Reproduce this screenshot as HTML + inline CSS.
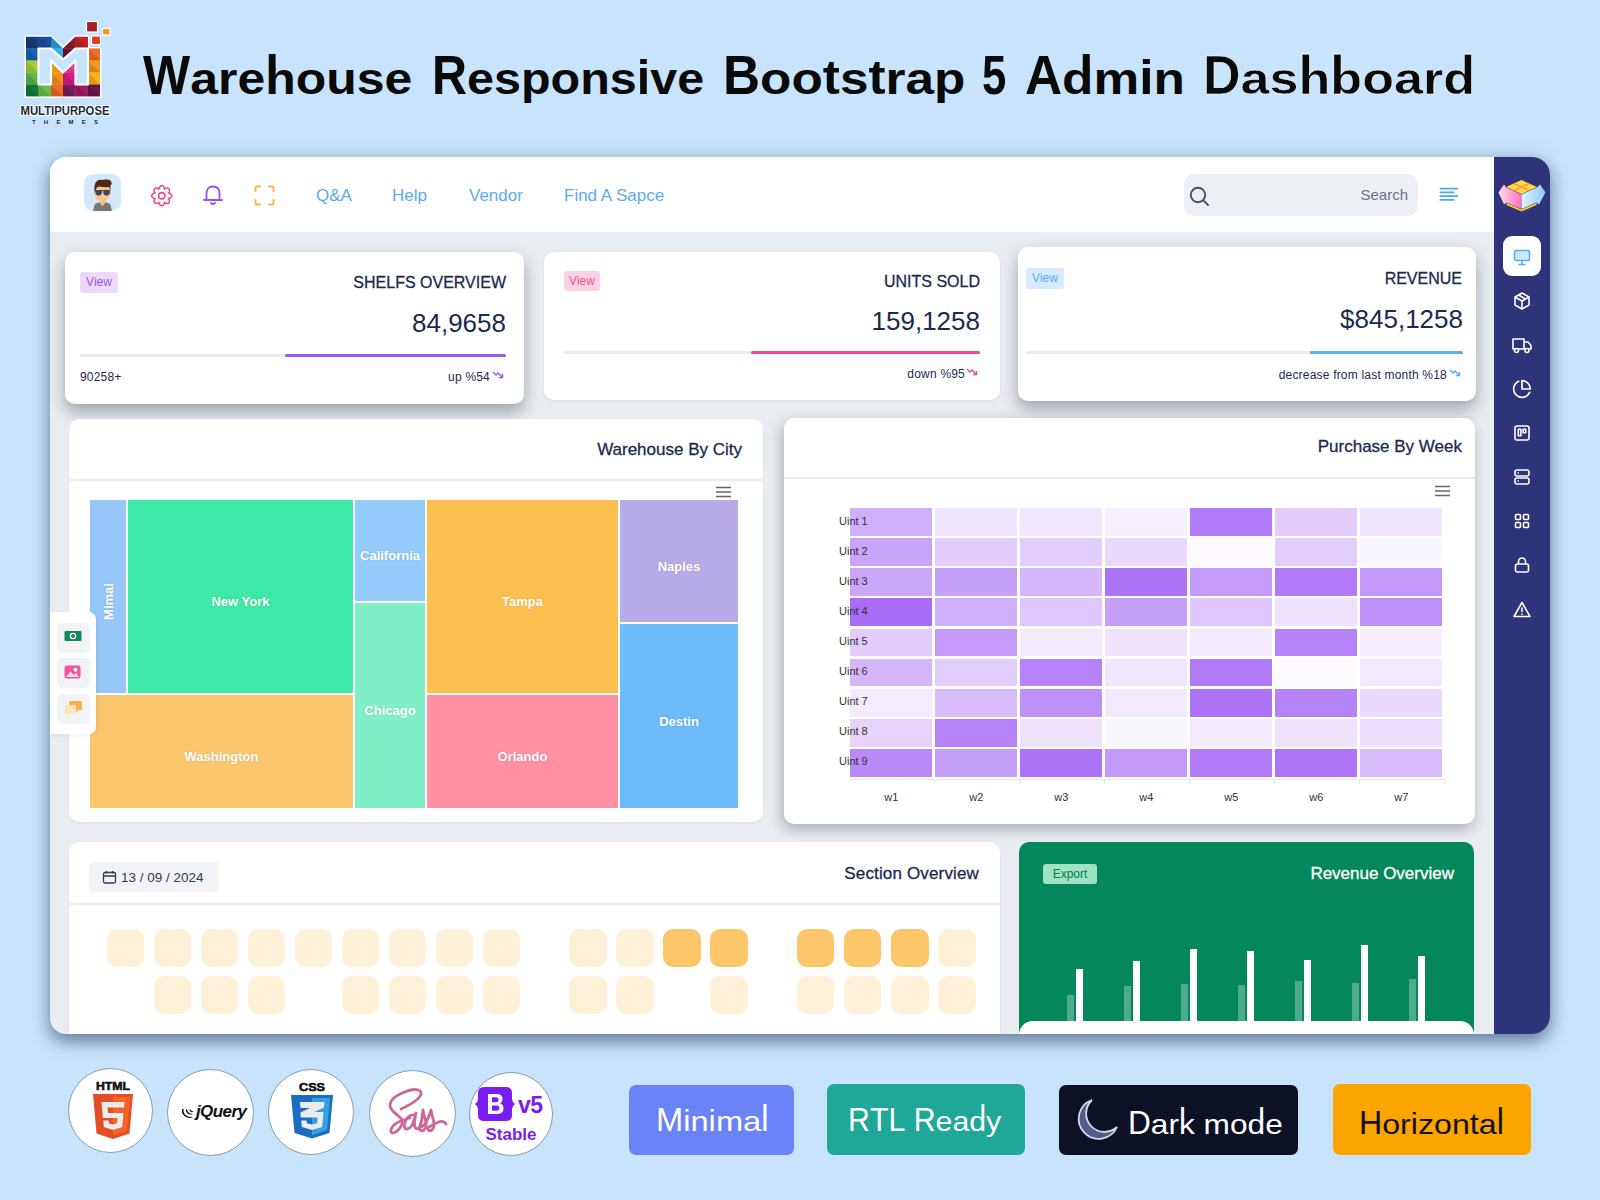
<!DOCTYPE html>
<html><head><meta charset="utf-8">
<style>
*{box-sizing:border-box;margin:0;padding:0}
html,body{width:1600px;height:1200px;overflow:hidden}
body{background:#c8e4fc;font-family:"Liberation Sans",sans-serif;position:relative;color:#1c2b4a}
.a{position:absolute}
#title{position:absolute;left:0;top:0}
.tw{position:absolute;font-family:"Liberation Sans",sans-serif}
#panel{position:absolute;left:50px;top:157px;width:1500px;height:877px;border-radius:16px 18px 18px 16px;overflow:hidden;background:#e9ecf1;box-shadow:0 8px 14px rgba(50,75,110,.45),0 4px 22px rgba(50,75,110,.35)}
#w{position:absolute;left:-50px;top:-157px;width:1600px;height:1200px}
.hdr{left:50px;top:157px;width:1444px;height:75px;background:#fff}
.side{left:1494px;top:157px;width:56px;height:877px;background:#2f3379}
.card{position:absolute;background:#fff;border-radius:10px}
.nav{position:absolute;top:186px;font-size:17px;color:#5caaf0;white-space:nowrap}
.badge{position:absolute;font-size:12px;border-radius:3px;text-align:center;line-height:21px}
.ttl{position:absolute;font-size:16px;color:#1b2a4e;white-space:nowrap;text-align:right;-webkit-text-stroke:.3px currentColor}
.num{position:absolute;font-size:26px;color:#1b2a4e;white-space:nowrap;text-align:right}
.small{position:absolute;font-size:12px;letter-spacing:.2px;color:#1b2a4e;white-space:nowrap}
.tm{position:absolute;color:#fff;font-weight:bold;font-size:13px;display:flex;align-items:center;justify-content:center;padding-top:10px;text-shadow:0 0 2px rgba(0,0,0,.15)}
.seat{position:absolute;width:37.6px;height:37.6px;border-radius:10px;background:#fff0d8}
.seat.d{background:#fbc76a}
.circ{position:absolute;width:84px;height:84px;border-radius:50%;background:#fff;border:1px solid #8a9aa8}
.btn{position:absolute;border-radius:7px;color:#fff;font-size:31px;display:flex;align-items:center;justify-content:center;white-space:nowrap}
</style></head><body>

<!-- logo -->
<svg class="a" style="left:0;top:0" width="130" height="130" viewBox="0 0 130 130">
  <defs><clipPath id="lc"><path d="M26 36.5 L51 36.5 L63 48.5 L75.5 36.5 L88 36.5 L88 48.5 L100 48.5 L100 96.5 L26 96.5Z"/></clipPath></defs>
  <path d="M26 36.5 L51 36.5 L63 48.5 L75.5 36.5 L88 36.5 L88 48.5 L100 48.5 L100 96.5 L26 96.5Z" fill="none" stroke="#fff" stroke-width="3" stroke-linejoin="round"/>
  <g clip-path="url(#lc)"><rect x="26" y="36.5" width="12.8" height="12.3" fill="#1d3a78"/><path d="M26 36.5 L38.5 48.5 L26 48.5Z" fill="#000" opacity=".12"/><rect x="26" y="48.5" width="12.8" height="12.3" fill="#1662b8"/><path d="M26 48.5 L38.5 60.5 L26 60.5Z" fill="#000" opacity=".12"/><rect x="26" y="60.5" width="12.8" height="12.3" fill="#a5cf3a"/><path d="M26 60.5 L38.5 72.5 L26 72.5Z" fill="#000" opacity=".12"/><rect x="26" y="72.5" width="12.8" height="12.3" fill="#5eb74b"/><path d="M26 72.5 L38.5 84.5 L26 84.5Z" fill="#000" opacity=".12"/><rect x="26" y="84.5" width="12.8" height="12.3" fill="#0f7a3b"/><path d="M26 84.5 L38.5 96.5 L26 96.5Z" fill="#000" opacity=".12"/><rect x="38.5" y="36.5" width="12.8" height="12.3" fill="#1a4d9c"/><path d="M38.5 36.5 L51.0 48.5 L38.5 48.5Z" fill="#000" opacity=".12"/><rect x="38.5" y="48.5" width="12.8" height="12.3" fill="#2a9ee0"/><path d="M38.5 48.5 L51.0 60.5 L38.5 60.5Z" fill="#000" opacity=".12"/><rect x="38.5" y="60.5" width="12.8" height="12.3" fill="#8cc84a"/><path d="M38.5 60.5 L51.0 72.5 L38.5 72.5Z" fill="#000" opacity=".12"/><rect x="38.5" y="72.5" width="12.8" height="12.3" fill="#4fae4a"/><path d="M38.5 72.5 L51.0 84.5 L38.5 84.5Z" fill="#000" opacity=".12"/><rect x="38.5" y="84.5" width="12.8" height="12.3" fill="#67bd48"/><path d="M38.5 84.5 L51.0 96.5 L38.5 96.5Z" fill="#000" opacity=".12"/><rect x="51" y="36.5" width="12.3" height="12.3" fill="#2aa3df"/><path d="M51 36.5 L63 48.5 L51 48.5Z" fill="#000" opacity=".12"/><rect x="51" y="48.5" width="12.3" height="12.3" fill="#31b4e8"/><path d="M51 48.5 L63 60.5 L51 60.5Z" fill="#000" opacity=".12"/><rect x="51" y="60.5" width="12.3" height="12.3" fill="#f8b41c"/><path d="M51 60.5 L63 72.5 L51 72.5Z" fill="#000" opacity=".12"/><rect x="51" y="72.5" width="12.3" height="12.3" fill="#f5901f"/><path d="M51 72.5 L63 84.5 L51 84.5Z" fill="#000" opacity=".12"/><rect x="51" y="84.5" width="12.3" height="12.3" fill="#f06a22"/><path d="M51 84.5 L63 96.5 L51 96.5Z" fill="#000" opacity=".12"/><rect x="63" y="36.5" width="12.8" height="12.3" fill="#8a1b22"/><path d="M63 36.5 L75.5 48.5 L63 48.5Z" fill="#000" opacity=".12"/><rect x="63" y="48.5" width="12.8" height="12.3" fill="#6f0f27"/><path d="M63 48.5 L75.5 60.5 L63 60.5Z" fill="#000" opacity=".12"/><rect x="63" y="60.5" width="12.8" height="12.3" fill="#ef3c8e"/><path d="M63 60.5 L75.5 72.5 L63 72.5Z" fill="#000" opacity=".12"/><rect x="63" y="72.5" width="12.8" height="12.3" fill="#d61c8a"/><path d="M63 72.5 L75.5 84.5 L63 84.5Z" fill="#000" opacity=".12"/><rect x="63" y="84.5" width="12.8" height="12.3" fill="#7c1d5b"/><path d="M63 84.5 L75.5 96.5 L63 96.5Z" fill="#000" opacity=".12"/><rect x="75.5" y="36.5" width="12.8" height="12.3" fill="#c1232b"/><path d="M75.5 36.5 L88.0 48.5 L75.5 48.5Z" fill="#000" opacity=".12"/><rect x="75.5" y="48.5" width="12.8" height="12.3" fill="#e83a25"/><path d="M75.5 48.5 L88.0 60.5 L75.5 60.5Z" fill="#000" opacity=".12"/><rect x="75.5" y="60.5" width="12.8" height="12.3" fill="#f0a02a"/><path d="M75.5 60.5 L88.0 72.5 L75.5 72.5Z" fill="#000" opacity=".12"/><rect x="75.5" y="72.5" width="12.8" height="12.3" fill="#c71e7a"/><path d="M75.5 72.5 L88.0 84.5 L75.5 84.5Z" fill="#000" opacity=".12"/><rect x="75.5" y="84.5" width="12.8" height="12.3" fill="#9e1b66"/><path d="M75.5 84.5 L88.0 96.5 L75.5 96.5Z" fill="#000" opacity=".12"/><rect x="88" y="36.5" width="12.3" height="12.3" fill="#f26a24"/><path d="M88 36.5 L100 48.5 L88 48.5Z" fill="#000" opacity=".12"/><rect x="88" y="48.5" width="12.3" height="12.3" fill="#f26c22"/><path d="M88 48.5 L100 60.5 L88 60.5Z" fill="#000" opacity=".12"/><rect x="88" y="60.5" width="12.3" height="12.3" fill="#f7961e"/><path d="M88 60.5 L100 72.5 L88 72.5Z" fill="#000" opacity=".12"/><rect x="88" y="72.5" width="12.3" height="12.3" fill="#fbb21b"/><path d="M88 72.5 L100 84.5 L88 84.5Z" fill="#000" opacity=".12"/><rect x="88" y="84.5" width="12.3" height="12.3" fill="#6b1647"/><path d="M88 84.5 L100 96.5 L88 96.5Z" fill="#000" opacity=".12"/></g>
  <path d="M38.5 48.5 L51 48.5 L63 59.5 L75.5 48.5 L88 48.5 L88 84.5 L75.5 84.5 L75.5 60.5 L63 72.5 L51 60.5 L51 84.5 L38.5 84.5Z" fill="#c8e4fc" stroke="#fff" stroke-width="2.2" stroke-linejoin="round"/>
  <rect x="86.5" y="21.5" width="11" height="10.5" fill="#a61e22" stroke="#fff" stroke-width="1.2"/>
  <rect x="102.5" y="28.5" width="7.5" height="6.5" fill="#f7941d" stroke="#fff" stroke-width="1.2"/>
  <rect x="91.5" y="36" width="9" height="8.5" fill="#e8381f" stroke="#fff" stroke-width="1.2"/>
  <text x="65" y="114.5" text-anchor="middle" font-family="Liberation Sans" font-weight="bold" font-size="12" fill="#1d2a36" stroke="#fff" stroke-width="2.2" paint-order="stroke" textLength="89" lengthAdjust="spacingAndGlyphs">MULTIPURPOSE</text>
  <text x="65" y="123.5" text-anchor="middle" font-family="Liberation Sans" font-weight="bold" font-size="6" fill="#1d2a36" textLength="66" lengthAdjust="spacing">THEMES</text>
</svg>

<div id="title"><div class="tw" style="left:143.0px;top:42.0px;font-size:55px;line-height:66px;font-weight:bold;color:#0a0a0a;white-space:nowrap;transform-origin:0 0;transform:scaleX(0.9085)"><span style="display:inline-block">W</span><span style="display:inline-block;transform:scaleY(0.81);transform-origin:50% 52.06px">a</span><span style="display:inline-block;transform:scaleY(0.81);transform-origin:50% 52.06px">r</span><span style="display:inline-block;transform:scaleY(0.81);transform-origin:50% 52.06px">e</span><span style="display:inline-block;position:relative"><span style="display:inline-block;clip-path:inset(20.11px -4px -6px -4px);transform-origin:50% 52.06px;transform:scaleY(0.81)">h</span><span style="position:absolute;left:0;top:0;clip-path:inset(-6px -4px 44.69px -4px);transform-origin:0 0;transform:translateY(-9.623px) scaleY(1.7524)">h</span></span><span style="display:inline-block;transform:scaleY(0.81);transform-origin:50% 52.06px">o</span><span style="display:inline-block;transform:scaleY(0.81);transform-origin:50% 52.06px">u</span><span style="display:inline-block;transform:scaleY(0.81);transform-origin:50% 52.06px">s</span><span style="display:inline-block;transform:scaleY(0.81);transform-origin:50% 52.06px">e</span></div><div class="tw" style="left:431.9px;top:42.0px;font-size:55px;line-height:66px;font-weight:bold;color:#0a0a0a;white-space:nowrap;transform-origin:0 0;transform:scaleX(0.8816)"><span style="display:inline-block">R</span><span style="display:inline-block;transform:scaleY(0.81);transform-origin:50% 52.06px">e</span><span style="display:inline-block;transform:scaleY(0.81);transform-origin:50% 52.06px">s</span><span style="display:inline-block;transform:scaleY(0.81);transform-origin:50% 52.06px">p</span><span style="display:inline-block;transform:scaleY(0.81);transform-origin:50% 52.06px">o</span><span style="display:inline-block;transform:scaleY(0.81);transform-origin:50% 52.06px">n</span><span style="display:inline-block;transform:scaleY(0.81);transform-origin:50% 52.06px">s</span><span style="display:inline-block;transform:scaleY(0.867);transform-origin:50% 52.06px">i</span><span style="display:inline-block;transform:scaleY(0.81);transform-origin:50% 52.06px">v</span><span style="display:inline-block;transform:scaleY(0.81);transform-origin:50% 52.06px">e</span></div><div class="tw" style="left:722.7px;top:42.0px;font-size:55px;line-height:66px;font-weight:bold;color:#0a0a0a;white-space:nowrap;transform-origin:0 0;transform:scaleX(0.9331)"><span style="display:inline-block">B</span><span style="display:inline-block;transform:scaleY(0.81);transform-origin:50% 52.06px">o</span><span style="display:inline-block;transform:scaleY(0.81);transform-origin:50% 52.06px">o</span><span style="display:inline-block;transform:scaleY(0.867);transform-origin:50% 52.06px">t</span><span style="display:inline-block;transform:scaleY(0.81);transform-origin:50% 52.06px">s</span><span style="display:inline-block;transform:scaleY(0.867);transform-origin:50% 52.06px">t</span><span style="display:inline-block;transform:scaleY(0.81);transform-origin:50% 52.06px">r</span><span style="display:inline-block;transform:scaleY(0.81);transform-origin:50% 52.06px">a</span><span style="display:inline-block;transform:scaleY(0.81);transform-origin:50% 52.06px">p</span></div><div class="tw" style="left:982.3px;top:42.0px;font-size:55px;line-height:66px;font-weight:bold;color:#0a0a0a;white-space:nowrap;transform-origin:0 0;transform:scaleX(0.7941)"><span style="display:inline-block">5</span></div><div class="tw" style="left:1025.1px;top:42.0px;font-size:55px;line-height:66px;font-weight:bold;color:#0a0a0a;white-space:nowrap;transform-origin:0 0;transform:scaleX(0.9341)"><span style="display:inline-block">A</span><span style="display:inline-block;position:relative"><span style="display:inline-block;clip-path:inset(20.11px -4px -6px -4px);transform-origin:50% 52.06px;transform:scaleY(0.81)">d</span><span style="position:absolute;left:0;top:0;clip-path:inset(-6px -4px 44.69px -4px);transform-origin:0 0;transform:translateY(-9.623px) scaleY(1.7524)">d</span></span><span style="display:inline-block;transform:scaleY(0.81);transform-origin:50% 52.06px">m</span><span style="display:inline-block;transform:scaleY(0.867);transform-origin:50% 52.06px">i</span><span style="display:inline-block;transform:scaleY(0.81);transform-origin:50% 52.06px">n</span></div><div class="tw" style="left:1202.7px;top:42.0px;font-size:55px;line-height:66px;font-weight:bold;color:#0a0a0a;white-space:nowrap;transform-origin:0 0;transform:scaleX(0.9464);-webkit-text-stroke:.5px #fff"><span style="display:inline-block">D</span><span style="display:inline-block;transform:scaleY(0.81);transform-origin:50% 52.06px">a</span><span style="display:inline-block;transform:scaleY(0.81);transform-origin:50% 52.06px">s</span><span style="display:inline-block;position:relative"><span style="display:inline-block;clip-path:inset(20.11px -4px -6px -4px);transform-origin:50% 52.06px;transform:scaleY(0.81)">h</span><span style="position:absolute;left:0;top:0;clip-path:inset(-6px -4px 44.69px -4px);transform-origin:0 0;transform:translateY(-9.623px) scaleY(1.7524)">h</span></span><span style="display:inline-block;position:relative"><span style="display:inline-block;clip-path:inset(20.11px -4px -6px -4px);transform-origin:50% 52.06px;transform:scaleY(0.81)">b</span><span style="position:absolute;left:0;top:0;clip-path:inset(-6px -4px 44.69px -4px);transform-origin:0 0;transform:translateY(-9.623px) scaleY(1.7524)">b</span></span><span style="display:inline-block;transform:scaleY(0.81);transform-origin:50% 52.06px">o</span><span style="display:inline-block;transform:scaleY(0.81);transform-origin:50% 52.06px">a</span><span style="display:inline-block;transform:scaleY(0.81);transform-origin:50% 52.06px">r</span><span style="display:inline-block;position:relative"><span style="display:inline-block;clip-path:inset(20.11px -4px -6px -4px);transform-origin:50% 52.06px;transform:scaleY(0.81)">d</span><span style="position:absolute;left:0;top:0;clip-path:inset(-6px -4px 44.69px -4px);transform-origin:0 0;transform:translateY(-9.623px) scaleY(1.7524)">d</span></span></div></div>

<div id="panel"><div id="w">
  <div class="a hdr"></div>
  <!-- avatar -->
  <div class="a" style="left:84px;top:174px;width:37px;height:37px;border-radius:9px;background:#d2e8fc;overflow:hidden">
    <svg width="37" height="37" viewBox="0 0 37 37">
      <path d="M9 37 L10.5 31 Q12 29 15.5 28.3 L21.5 28.3 Q25 29 26.5 31 L28 37Z" fill="#7a7674"/>
      <path d="M15.5 25 L21.5 25 L21.5 28.5 L18.5 32.5 L15.5 28.5Z" fill="#f6bd84"/>
      <circle cx="10.8" cy="19.5" r="1.3" fill="#f6bd84"/><circle cx="26.3" cy="19.5" r="1.3" fill="#f6bd84"/>
      <path d="M11 14 Q11 11 18.5 11 Q26 11 26 14 L26 21 Q26 25 21 27 Q18.5 28 16 27 Q11 25 11 21Z" fill="#f9c690"/>
      <path d="M10.5 17.5 Q9.8 9 13 7 Q15 5.3 18 6 Q20 5 23 5.6 Q26.5 5.5 27.5 8 Q28.3 10.5 26.5 11.5 L26.5 17 Q25.5 14 25 13 Q21 13.5 15 12.5 Q12 13 11.5 17.5Z" fill="#4f2712"/>
      <path d="M11.2 16.6 H18 Q18.2 21.8 14.6 21.8 Q11.2 21.8 11.2 16.6Z M19.2 16.6 H26 Q26 21.8 22.6 21.8 Q19 21.8 19.2 16.6Z" fill="#3c485c"/>
      <path d="M10.8 16.6 H26.4" stroke="#2a3140" stroke-width=".8"/>
    </svg>
  </div>
  <!-- gear -->
  <svg class="a" style="left:149.5px;top:183.5px" width="23.5" height="23.5" viewBox="0 0 24 24" fill="none" stroke="#f6478e" stroke-width="1.6" stroke-linejoin="round"><circle cx="12" cy="12" r="3.2"/><path d="M12.00 1.80 L12.13 1.80 L12.27 1.82 L12.40 1.84 L12.53 1.87 L12.66 1.91 L12.79 1.96 L12.92 2.02 L13.04 2.08 L13.17 2.15 L13.29 2.24 L13.40 2.33 L13.52 2.42 L13.63 2.53 L13.73 2.64 L13.84 2.76 L13.94 2.88 L14.03 3.02 L14.12 3.15 L14.21 3.30 L14.29 3.45 L14.37 3.60 L14.44 3.76 L14.51 3.93 L14.57 4.10 L14.62 4.27 L14.67 4.45 L14.72 4.64 L14.75 4.83 L14.78 5.03 L14.79 5.26 L14.96 5.11 L15.12 4.98 L15.28 4.87 L15.45 4.77 L15.61 4.68 L15.77 4.60 L15.94 4.52 L16.10 4.45 L16.26 4.39 L16.43 4.33 L16.59 4.28 L16.75 4.24 L16.92 4.21 L17.08 4.18 L17.24 4.17 L17.39 4.15 L17.55 4.15 L17.70 4.16 L17.85 4.17 L17.99 4.19 L18.14 4.21 L18.28 4.25 L18.41 4.29 L18.54 4.34 L18.67 4.40 L18.79 4.46 L18.90 4.53 L19.01 4.61 L19.11 4.70 L19.21 4.79 L19.30 4.89 L19.39 4.99 L19.47 5.10 L19.54 5.21 L19.60 5.33 L19.66 5.46 L19.71 5.59 L19.75 5.72 L19.79 5.86 L19.81 6.01 L19.83 6.15 L19.84 6.30 L19.85 6.45 L19.85 6.61 L19.83 6.76 L19.82 6.92 L19.79 7.08 L19.76 7.25 L19.72 7.41 L19.67 7.57 L19.61 7.74 L19.55 7.90 L19.48 8.06 L19.40 8.23 L19.32 8.39 L19.23 8.55 L19.13 8.72 L19.02 8.88 L18.89 9.04 L18.74 9.21 L18.97 9.22 L19.17 9.25 L19.36 9.28 L19.55 9.33 L19.73 9.38 L19.90 9.43 L20.07 9.49 L20.24 9.56 L20.40 9.63 L20.55 9.71 L20.70 9.79 L20.85 9.88 L20.98 9.97 L21.12 10.06 L21.24 10.16 L21.36 10.27 L21.47 10.37 L21.58 10.48 L21.67 10.60 L21.76 10.71 L21.85 10.83 L21.92 10.96 L21.98 11.08 L22.04 11.21 L22.09 11.34 L22.13 11.47 L22.16 11.60 L22.18 11.73 L22.20 11.87 L22.20 12.00 L22.20 12.13 L22.18 12.27 L22.16 12.40 L22.13 12.53 L22.09 12.66 L22.04 12.79 L21.98 12.92 L21.92 13.04 L21.85 13.17 L21.76 13.29 L21.67 13.40 L21.58 13.52 L21.47 13.63 L21.36 13.73 L21.24 13.84 L21.12 13.94 L20.98 14.03 L20.85 14.12 L20.70 14.21 L20.55 14.29 L20.40 14.37 L20.24 14.44 L20.07 14.51 L19.90 14.57 L19.73 14.62 L19.55 14.67 L19.36 14.72 L19.17 14.75 L18.97 14.78 L18.74 14.79 L18.89 14.96 L19.02 15.12 L19.13 15.28 L19.23 15.45 L19.32 15.61 L19.40 15.77 L19.48 15.94 L19.55 16.10 L19.61 16.26 L19.67 16.43 L19.72 16.59 L19.76 16.75 L19.79 16.92 L19.82 17.08 L19.83 17.24 L19.85 17.39 L19.85 17.55 L19.84 17.70 L19.83 17.85 L19.81 17.99 L19.79 18.14 L19.75 18.28 L19.71 18.41 L19.66 18.54 L19.60 18.67 L19.54 18.79 L19.47 18.90 L19.39 19.01 L19.30 19.11 L19.21 19.21 L19.11 19.30 L19.01 19.39 L18.90 19.47 L18.79 19.54 L18.67 19.60 L18.54 19.66 L18.41 19.71 L18.28 19.75 L18.14 19.79 L17.99 19.81 L17.85 19.83 L17.70 19.84 L17.55 19.85 L17.39 19.85 L17.24 19.83 L17.08 19.82 L16.92 19.79 L16.75 19.76 L16.59 19.72 L16.43 19.67 L16.26 19.61 L16.10 19.55 L15.94 19.48 L15.77 19.40 L15.61 19.32 L15.45 19.23 L15.28 19.13 L15.12 19.02 L14.96 18.89 L14.79 18.74 L14.78 18.97 L14.75 19.17 L14.72 19.36 L14.67 19.55 L14.62 19.73 L14.57 19.90 L14.51 20.07 L14.44 20.24 L14.37 20.40 L14.29 20.55 L14.21 20.70 L14.12 20.85 L14.03 20.98 L13.94 21.12 L13.84 21.24 L13.73 21.36 L13.63 21.47 L13.52 21.58 L13.40 21.67 L13.29 21.76 L13.17 21.85 L13.04 21.92 L12.92 21.98 L12.79 22.04 L12.66 22.09 L12.53 22.13 L12.40 22.16 L12.27 22.18 L12.13 22.20 L12.00 22.20 L11.87 22.20 L11.73 22.18 L11.60 22.16 L11.47 22.13 L11.34 22.09 L11.21 22.04 L11.08 21.98 L10.96 21.92 L10.83 21.85 L10.71 21.76 L10.60 21.67 L10.48 21.58 L10.37 21.47 L10.27 21.36 L10.16 21.24 L10.06 21.12 L9.97 20.98 L9.88 20.85 L9.79 20.70 L9.71 20.55 L9.63 20.40 L9.56 20.24 L9.49 20.07 L9.43 19.90 L9.38 19.73 L9.33 19.55 L9.28 19.36 L9.25 19.17 L9.22 18.97 L9.21 18.74 L9.04 18.89 L8.88 19.02 L8.72 19.13 L8.55 19.23 L8.39 19.32 L8.23 19.40 L8.06 19.48 L7.90 19.55 L7.74 19.61 L7.57 19.67 L7.41 19.72 L7.25 19.76 L7.08 19.79 L6.92 19.82 L6.76 19.83 L6.61 19.85 L6.45 19.85 L6.30 19.84 L6.15 19.83 L6.01 19.81 L5.86 19.79 L5.72 19.75 L5.59 19.71 L5.46 19.66 L5.33 19.60 L5.21 19.54 L5.10 19.47 L4.99 19.39 L4.89 19.30 L4.79 19.21 L4.70 19.11 L4.61 19.01 L4.53 18.90 L4.46 18.79 L4.40 18.67 L4.34 18.54 L4.29 18.41 L4.25 18.28 L4.21 18.14 L4.19 17.99 L4.17 17.85 L4.16 17.70 L4.15 17.55 L4.15 17.39 L4.17 17.24 L4.18 17.08 L4.21 16.92 L4.24 16.75 L4.28 16.59 L4.33 16.43 L4.39 16.26 L4.45 16.10 L4.52 15.94 L4.60 15.77 L4.68 15.61 L4.77 15.45 L4.87 15.28 L4.98 15.12 L5.11 14.96 L5.26 14.79 L5.03 14.78 L4.83 14.75 L4.64 14.72 L4.45 14.67 L4.27 14.62 L4.10 14.57 L3.93 14.51 L3.76 14.44 L3.60 14.37 L3.45 14.29 L3.30 14.21 L3.15 14.12 L3.02 14.03 L2.88 13.94 L2.76 13.84 L2.64 13.73 L2.53 13.63 L2.42 13.52 L2.33 13.40 L2.24 13.29 L2.15 13.17 L2.08 13.04 L2.02 12.92 L1.96 12.79 L1.91 12.66 L1.87 12.53 L1.84 12.40 L1.82 12.27 L1.80 12.13 L1.80 12.00 L1.80 11.87 L1.82 11.73 L1.84 11.60 L1.87 11.47 L1.91 11.34 L1.96 11.21 L2.02 11.08 L2.08 10.96 L2.15 10.83 L2.24 10.71 L2.33 10.60 L2.42 10.48 L2.53 10.37 L2.64 10.27 L2.76 10.16 L2.88 10.06 L3.02 9.97 L3.15 9.88 L3.30 9.79 L3.45 9.71 L3.60 9.63 L3.76 9.56 L3.93 9.49 L4.10 9.43 L4.27 9.38 L4.45 9.33 L4.64 9.28 L4.83 9.25 L5.03 9.22 L5.26 9.21 L5.11 9.04 L4.98 8.88 L4.87 8.72 L4.77 8.55 L4.68 8.39 L4.60 8.23 L4.52 8.06 L4.45 7.90 L4.39 7.74 L4.33 7.57 L4.28 7.41 L4.24 7.25 L4.21 7.08 L4.18 6.92 L4.17 6.76 L4.15 6.61 L4.15 6.45 L4.16 6.30 L4.17 6.15 L4.19 6.01 L4.21 5.86 L4.25 5.72 L4.29 5.59 L4.34 5.46 L4.40 5.33 L4.46 5.21 L4.53 5.10 L4.61 4.99 L4.70 4.89 L4.79 4.79 L4.89 4.70 L4.99 4.61 L5.10 4.53 L5.21 4.46 L5.33 4.40 L5.46 4.34 L5.59 4.29 L5.72 4.25 L5.86 4.21 L6.01 4.19 L6.15 4.17 L6.30 4.16 L6.45 4.15 L6.61 4.15 L6.76 4.17 L6.92 4.18 L7.08 4.21 L7.25 4.24 L7.41 4.28 L7.57 4.33 L7.74 4.39 L7.90 4.45 L8.06 4.52 L8.23 4.60 L8.39 4.68 L8.55 4.77 L8.72 4.87 L8.88 4.98 L9.04 5.11 L9.21 5.26 L9.22 5.03 L9.25 4.83 L9.28 4.64 L9.33 4.45 L9.38 4.27 L9.43 4.10 L9.49 3.93 L9.56 3.76 L9.63 3.60 L9.71 3.45 L9.79 3.30 L9.88 3.15 L9.97 3.02 L10.06 2.88 L10.16 2.76 L10.27 2.64 L10.37 2.53 L10.48 2.42 L10.60 2.33 L10.71 2.24 L10.83 2.15 L10.96 2.08 L11.08 2.02 L11.21 1.96 L11.34 1.91 L11.47 1.87 L11.60 1.84 L11.73 1.82 L11.87 1.80Z"/></svg>
  <!-- bell -->
  <svg class="a" style="left:202px;top:184px" width="22" height="22" viewBox="0 0 22 22" fill="none" stroke="#9b4cf2" stroke-width="1.8" stroke-linecap="round" stroke-linejoin="round"><path d="M4.5 15.5 V9.5 Q4.5 2.5 11 2.5 Q17.5 2.5 17.5 9.5 V15.5"/><path d="M2 16 H20"/><path d="M9 19 Q11 21 13 19"/></svg>
  <!-- fullscreen -->
  <svg class="a" style="left:254px;top:185px" width="21" height="21" viewBox="0 0 21 21" fill="none" stroke="#fbb03f" stroke-width="1.9" stroke-linecap="round"><path d="M1.5 6 V3 Q1.5 1.5 3 1.5 H6"/><path d="M15 1.5 H18 Q19.5 1.5 19.5 3 V6"/><path d="M19.5 15 V18 Q19.5 19.5 18 19.5 H15"/><path d="M6 19.5 H3 Q1.5 19.5 1.5 18 V15"/></svg>
  <div class="nav" style="left:316px">Q&amp;A</div>
  <div class="nav" style="left:392px">Help</div>
  <div class="nav" style="left:469px">Vendor</div>
  <div class="nav" style="left:564px">Find A Sapce</div>
  <!-- search -->
  <div class="a" style="left:1184px;top:174px;width:234px;height:42px;border-radius:10px;background:#eceff4"></div>
  <svg class="a" style="left:1189px;top:186px" width="21" height="21" viewBox="0 0 21 21" fill="none" stroke="#475069" stroke-width="1.9" stroke-linecap="round"><circle cx="9" cy="9" r="7.2"/><path d="M14.3 14.3 L19 19"/></svg>
  <div class="a" style="left:1300px;top:186px;width:108px;text-align:right;font-size:15px;color:#69728c">Search</div>
  <svg class="a" style="left:1438px;top:186px" width="22" height="17" viewBox="0 0 22 17" stroke="#4aa6f6" stroke-width="1.9" stroke-linecap="round"><path d="M2.5 2.6 H19.3 M2.5 6.4 H15.6 M2.5 10.1 H19.3 M2.5 13.9 H15.6"/></svg>
  <div class="a side"></div>
  <!-- sidebar logo cube -->
  <svg class="a" style="left:1490px;top:165px" width="65" height="60" viewBox="0 0 65 60">
    <defs>
      <linearGradient id="pk" x1="0" x2="1" y1="0" y2="0"><stop offset="0" stop-color="#ffe0ef"/><stop offset="1" stop-color="#ff6fb5"/></linearGradient>
      <linearGradient id="bl" x1="0" x2="1" y1="0" y2="0"><stop offset="0" stop-color="#dff1ff"/><stop offset="1" stop-color="#8fcaf8"/></linearGradient>
    </defs>
    <path d="M31.5 15 L47 22 L31.5 29 L16 22Z" fill="#ffd84a"/>
    <path d="M23.75 18.5 L39.25 25.5 M39.25 18.5 L23.75 25.5" stroke="#ff9a2e" stroke-width="1.6"/>
    <path d="M16.5 38 L31.5 44.5 L31.5 46.5 L16.5 40Z" fill="#ffd21f"/>
    <path d="M46.5 38 L31.5 44.5 L31.5 46.5 L46.5 40Z" fill="#ffd21f"/>
    <path d="M16 22.5 L31.5 29.5 L31.5 44 L16.5 37.5 L14 39.5 L8.5 27.5 L14 19.5Z" fill="url(#pk)"/>
    <path d="M47 22.5 L31.5 29.5 L31.5 44 L46.5 37.5 L49 39.5 L55.5 27.5 L50 19.5Z" fill="url(#bl)"/>
  </svg>
  <div class="a" style="left:1503px;top:236px;width:38px;height:40px;border-radius:9px;background:#fff"></div>
  <svg class="a" style="left:1512px;top:248px" width="20" height="19" viewBox="0 0 20 19" fill="none" stroke="#56adf5" stroke-width="1.6" stroke-linecap="round"><rect x="2.5" y="2.5" width="15" height="10" rx="1.5" fill="#cfe6fc"/><path d="M7 16.5 H13 M10 12.5 V16.5"/></svg>
  <g></g>
  <svg class="a" style="left:1512px;top:291px" width="20" height="20" viewBox="0 0 20 20" fill="none" stroke="#fff" stroke-width="1.6" stroke-linejoin="round"><path d="M10 2 L17 6 V14 L10 18 L3 14 V6Z"/><path d="M3 6 L10 10 L17 6 M10 10 V18 M6.5 4 L13.5 8"/></svg>
  <svg class="a" style="left:1511px;top:335px" width="22" height="20" viewBox="0 0 22 20" fill="none" stroke="#fff" stroke-width="1.6" stroke-linejoin="round"><path d="M2 4 H13 V14 H2Z"/><path d="M13 7 H17 L20 10.5 V14 H13"/><circle cx="5.5" cy="15.5" r="2" fill="#2f3379"/><circle cx="16" cy="15.5" r="2" fill="#2f3379"/></svg>
  <svg class="a" style="left:1512px;top:379px" width="20" height="20" viewBox="0 0 24 24" fill="none" stroke="#fff" stroke-width="2" stroke-linecap="round" stroke-linejoin="round"><path d="M21.21 15.89A10 10 0 1 1 8 2.83"/><path d="M22 12A10 10 0 0 0 12 2v10z"/></svg>
  <svg class="a" style="left:1512px;top:423px" width="20" height="20" viewBox="0 0 20 20" fill="none" stroke="#fff" stroke-width="1.6" stroke-linejoin="round"><rect x="3" y="3" width="14" height="14" rx="2"/><rect x="6.3" y="6.3" width="2.6" height="6.5"/><rect x="11.1" y="6.3" width="2.6" height="3.5"/></svg>
  <svg class="a" style="left:1512px;top:467px" width="20" height="20" viewBox="0 0 20 20" fill="none" stroke="#fff" stroke-width="1.6" stroke-linejoin="round"><rect x="3" y="3" width="14" height="6" rx="2"/><rect x="3" y="11" width="14" height="6" rx="2"/><path d="M6 6 H6.2 M6 14 H6.2" stroke-linecap="round"/></svg>
  <svg class="a" style="left:1512px;top:511px" width="20" height="20" viewBox="0 0 20 20" fill="none" stroke="#fff" stroke-width="1.6" stroke-linejoin="round"><rect x="3.5" y="3.5" width="5" height="5" rx="1"/><rect x="11.5" y="3.5" width="5" height="5" rx="1"/><rect x="3.5" y="11.5" width="5" height="5" rx="1"/><rect x="11.5" y="11.5" width="5" height="5" rx="1"/></svg>
  <svg class="a" style="left:1512px;top:555px" width="20" height="20" viewBox="0 0 20 20" fill="none" stroke="#fff" stroke-width="1.6" stroke-linejoin="round"><rect x="3.5" y="9" width="13" height="8" rx="2"/><path d="M6.5 9 V6.5 A3.5 3.5 0 0 1 13.5 6.5 V9"/></svg>
  <svg class="a" style="left:1512px;top:600px" width="20" height="20" viewBox="0 0 20 20" fill="none" stroke="#fff" stroke-width="1.6" stroke-linejoin="round"><path d="M10 2.5 L18 16.5 H2Z"/><path d="M10 8 V11.5 M10 14 V14.2" stroke-linecap="round"/></svg>

  <!-- stat cards -->
  <div class="card" style="left:65px;top:252px;width:459px;height:152px;box-shadow:0 8px 16px rgba(30,40,50,.36)"></div>
  <div class="badge" style="left:80px;top:272px;width:38px;height:21px;background:#ecd9fc;color:#9a56f0">View</div>
  <div class="ttl" style="left:250px;top:274px;width:256px">SHELFS OVERVIEW</div>
  <div class="num" style="left:250px;top:308px;width:256px">84,9658</div>
  <div class="a" style="left:80px;top:354px;width:426px;height:3px;border-radius:2px;background:#e9ebef"></div>
  <div class="a" style="left:285px;top:354px;width:221px;height:3px;border-radius:2px;background:#9a5bf4"></div>
  <div class="small" style="left:80px;top:370px">90258+</div>
  <div class="small" style="left:380px;top:370px;width:110px;text-align:right">up %54</div>
  <svg class="a" style="left:492px;top:370px" width="12" height="10" viewBox="0 0 12 10" fill="none" stroke="#9a5bf4" stroke-width="1.5"><path d="M1 2 L4 5 L6 3 L10 7"/><path d="M7 7.5 H10.5 V4" /></svg>

  <div class="card" style="left:544px;top:252px;width:456px;height:148px;box-shadow:0 1px 3px rgba(40,50,60,.08)"></div>
  <div class="badge" style="left:564px;top:271px;width:36px;height:20px;background:#fcd1e4;color:#f15590;line-height:20px">View</div>
  <div class="ttl" style="left:720px;top:273px;width:260px">UNITS SOLD</div>
  <div class="num" style="left:720px;top:306px;width:260px">159,1258</div>
  <div class="a" style="left:564px;top:351px;width:416px;height:3px;border-radius:2px;background:#e9ebef"></div>
  <div class="a" style="left:751px;top:351px;width:229px;height:3px;border-radius:2px;background:#f24b8d"></div>
  <div class="small" style="left:850px;top:367px;width:115px;text-align:right">down %95</div>
  <svg class="a" style="left:966px;top:367px" width="12" height="10" viewBox="0 0 12 10" fill="none" stroke="#f24b8d" stroke-width="1.5"><path d="M1 2 L4 5 L6 3 L10 7"/><path d="M7 7.5 H10.5 V4" /></svg>

  <div class="card" style="left:1018px;top:247px;width:458px;height:154px;box-shadow:0 8px 16px rgba(30,40,50,.36)"></div>
  <div class="badge" style="left:1026px;top:268px;width:38px;height:21px;background:#d7ebfd;color:#5aacf4">View</div>
  <div class="ttl" style="left:1200px;top:270px;width:262px">REVENUE</div>
  <div class="num" style="left:1200px;top:304px;width:263px">$845,1258</div>
  <div class="a" style="left:1026px;top:351px;width:437px;height:3px;border-radius:2px;background:#e9ebef"></div>
  <div class="a" style="left:1310px;top:351px;width:153px;height:3px;border-radius:2px;background:#5db0f6"></div>
  <div class="small" style="left:1200px;top:368px;width:247px;text-align:right">decrease from last month %18</div>
  <svg class="a" style="left:1449px;top:368px" width="12" height="10" viewBox="0 0 12 10" fill="none" stroke="#5db0f6" stroke-width="1.5"><path d="M1 2 L4 5 L6 3 L10 7"/><path d="M7 7.5 H10.5 V4" /></svg>

  <!-- warehouse by city -->
  <div class="card" style="left:69px;top:419px;width:694px;height:403px;box-shadow:0 1px 3px rgba(40,50,60,.06)"></div>
  <div class="a" style="left:69px;top:479px;width:694px;height:1.5px;background:#e8ebf0"></div>
  <div class="ttl" style="left:400px;top:440px;width:342px;font-size:17px">Warehouse By City</div>
  <svg class="a" style="left:715px;top:486px" width="17" height="12" viewBox="0 0 17 12" stroke="#5f6673" stroke-width="1.5"><path d="M1 1.5 H16 M1 6 H16 M1 10.5 H16"/></svg>
  <div class="tm" style="left:90px;top:500px;width:36px;height:193px;background:#97c7f8"><span style="transform:rotate(-90deg);display:inline-block;white-space:nowrap">Mimai</span></div>
  <div class="tm" style="left:128px;top:500px;width:225px;height:193px;background:#3ee8a9">New York</div>
  <div class="tm" style="left:90px;top:695px;width:263px;height:113px;background:#fbc66e">Washington</div>
  <div class="tm" style="left:355px;top:500px;width:70px;height:101px;background:#93cbfa">California</div>
  <div class="tm" style="left:355px;top:603px;width:70px;height:205px;background:#80efc7">Chicago</div>
  <div class="tm" style="left:427px;top:500px;width:191px;height:193px;background:#fdc050">Tampa</div>
  <div class="tm" style="left:427px;top:695px;width:191px;height:113px;background:#ff91a3">Orlando</div>
  <div class="tm" style="left:620px;top:500px;width:118px;height:122px;background:#b8ace8">Naples</div>
  <div class="tm" style="left:620px;top:624px;width:118px;height:184px;background:#6dbcf9">Destin</div>
  <!-- floating panel -->
  <div class="a" style="left:50px;top:612px;width:46px;height:122px;background:#fff;border-radius:0 7px 7px 0;box-shadow:1px 1px 4px rgba(0,0,0,.08)"></div>
  <div class="a" style="left:57px;top:623px;width:33px;height:30px;border-radius:5px;background:#f1f3f6"></div>
  <div class="a" style="left:57px;top:658px;width:33px;height:30px;border-radius:5px;background:#f1f3f6"></div>
  <div class="a" style="left:57px;top:694px;width:33px;height:30px;border-radius:5px;background:#f1f3f6"></div>
  <svg class="a" style="left:64px;top:630px" width="18" height="12" viewBox="0 0 18 12"><rect x="0.5" y="1" width="17" height="10" rx="1.2" fill="#0c8a5b"/><circle cx="9" cy="6" r="2.6" fill="none" stroke="#fff" stroke-width="1.4"/></svg>
  <svg class="a" style="left:64px;top:665px" width="17" height="14" viewBox="0 0 17 14"><rect x="0.5" y="0.5" width="16" height="13" rx="2.5" fill="#f2539a"/><path d="M2 12 L6.5 6.5 L10 10 L12 8 L15 12Z" fill="#fff" opacity=".8"/><circle cx="11.5" cy="4.8" r="2" fill="#fff"/></svg>
  <svg class="a" style="left:64px;top:700px" width="19" height="16" viewBox="0 0 19 16"><path d="M5 1 H18 V10 H14 L11 13 V10 H5Z" fill="#f9b24a"/><path d="M1 5 H12 V13 H5 L2.5 15.5 V13 H1Z" fill="#fde2b5"/></svg>

  <!-- purchase by week -->
  <div class="card" style="left:784px;top:418px;width:691px;height:406px;box-shadow:-2px 5px 14px rgba(30,40,50,.32)"></div>
  <div class="a" style="left:784px;top:477px;width:691px;height:1.5px;background:#e8ebf0"></div>
  <div class="ttl" style="left:1100px;top:437px;width:362px;font-size:17px">Purchase By Week</div>
  <svg class="a" style="left:1434px;top:485px" width="17" height="12" viewBox="0 0 17 12" stroke="#5f6673" stroke-width="1.5"><path d="M1 1.5 H16 M1 6 H16 M1 10.5 H16"/></svg>
  <div class="a" style="left:849.8px;top:508.1px;width:82.7px;height:27.9px;background:rgb(207, 174, 250)"></div>
  <div class="a" style="left:934.8px;top:508.1px;width:82.7px;height:27.9px;background:rgb(239, 229, 253)"></div>
  <div class="a" style="left:1019.8px;top:508.1px;width:82.7px;height:27.9px;background:rgb(240, 230, 253)"></div>
  <div class="a" style="left:1104.8px;top:508.1px;width:82.7px;height:27.9px;background:rgb(246, 240, 254)"></div>
  <div class="a" style="left:1189.8px;top:508.1px;width:82.7px;height:27.9px;background:rgb(177, 123, 247)"></div>
  <div class="a" style="left:1274.8px;top:508.1px;width:82.7px;height:27.9px;background:rgb(225, 204, 252)"></div>
  <div class="a" style="left:1359.8px;top:508.1px;width:82.7px;height:27.9px;background:rgb(239, 229, 253)"></div>
  <div class="a" style="left:839px;top:514.6px;font-size:11px;color:#333;white-space:nowrap">Uint 1</div>
  <div class="a" style="left:849.8px;top:538.2px;width:82.7px;height:27.9px;background:rgb(201, 164, 249)"></div>
  <div class="a" style="left:934.8px;top:538.2px;width:82.7px;height:27.9px;background:rgb(225, 204, 252)"></div>
  <div class="a" style="left:1019.8px;top:538.2px;width:82.7px;height:27.9px;background:rgb(226, 206, 252)"></div>
  <div class="a" style="left:1104.8px;top:538.2px;width:82.7px;height:27.9px;background:rgb(233, 218, 253)"></div>
  <div class="a" style="left:1189.8px;top:538.2px;width:82.7px;height:27.9px;background:rgb(252, 249, 255)"></div>
  <div class="a" style="left:1274.8px;top:538.2px;width:82.7px;height:27.9px;background:rgb(226, 206, 252)"></div>
  <div class="a" style="left:1359.8px;top:538.2px;width:82.7px;height:27.9px;background:rgb(249, 245, 254)"></div>
  <div class="a" style="left:839px;top:544.7px;font-size:11px;color:#333;white-space:nowrap">Uint 2</div>
  <div class="a" style="left:849.8px;top:568.3px;width:82.7px;height:27.9px;background:rgb(203, 167, 250)"></div>
  <div class="a" style="left:934.8px;top:568.3px;width:82.7px;height:27.9px;background:rgb(198, 159, 249)"></div>
  <div class="a" style="left:1019.8px;top:568.3px;width:82.7px;height:27.9px;background:rgb(213, 184, 251)"></div>
  <div class="a" style="left:1104.8px;top:568.3px;width:82.7px;height:27.9px;background:rgb(172, 115, 246)"></div>
  <div class="a" style="left:1189.8px;top:568.3px;width:82.7px;height:27.9px;background:rgb(196, 155, 249)"></div>
  <div class="a" style="left:1274.8px;top:568.3px;width:82.7px;height:27.9px;background:rgb(177, 123, 247)"></div>
  <div class="a" style="left:1359.8px;top:568.3px;width:82.7px;height:27.9px;background:rgb(194, 152, 249)"></div>
  <div class="a" style="left:839px;top:574.8px;font-size:11px;color:#333;white-space:nowrap">Uint 3</div>
  <div class="a" style="left:849.8px;top:598.4px;width:82.7px;height:27.9px;background:rgb(168, 108, 246)"></div>
  <div class="a" style="left:934.8px;top:598.4px;width:82.7px;height:27.9px;background:rgb(207, 174, 250)"></div>
  <div class="a" style="left:1019.8px;top:598.4px;width:82.7px;height:27.9px;background:rgb(222, 199, 252)"></div>
  <div class="a" style="left:1104.8px;top:598.4px;width:82.7px;height:27.9px;background:rgb(198, 159, 249)"></div>
  <div class="a" style="left:1189.8px;top:598.4px;width:82.7px;height:27.9px;background:rgb(222, 199, 252)"></div>
  <div class="a" style="left:1274.8px;top:598.4px;width:82.7px;height:27.9px;background:rgb(238, 226, 253)"></div>
  <div class="a" style="left:1359.8px;top:598.4px;width:82.7px;height:27.9px;background:rgb(190, 145, 248)"></div>
  <div class="a" style="left:839px;top:604.9px;font-size:11px;color:#333;white-space:nowrap">Uint 4</div>
  <div class="a" style="left:849.8px;top:628.5px;width:82.7px;height:27.9px;background:rgb(225, 204, 252)"></div>
  <div class="a" style="left:934.8px;top:628.5px;width:82.7px;height:27.9px;background:rgb(196, 155, 249)"></div>
  <div class="a" style="left:1019.8px;top:628.5px;width:82.7px;height:27.9px;background:rgb(243, 234, 254)"></div>
  <div class="a" style="left:1104.8px;top:628.5px;width:82.7px;height:27.9px;background:rgb(238, 226, 253)"></div>
  <div class="a" style="left:1189.8px;top:628.5px;width:82.7px;height:27.9px;background:rgb(242, 233, 254)"></div>
  <div class="a" style="left:1274.8px;top:628.5px;width:82.7px;height:27.9px;background:rgb(181, 130, 247)"></div>
  <div class="a" style="left:1359.8px;top:628.5px;width:82.7px;height:27.9px;background:rgb(245, 237, 254)"></div>
  <div class="a" style="left:839px;top:635.0px;font-size:11px;color:#333;white-space:nowrap">Uint 5</div>
  <div class="a" style="left:849.8px;top:658.6px;width:82.7px;height:27.9px;background:rgb(212, 182, 250)"></div>
  <div class="a" style="left:934.8px;top:658.6px;width:82.7px;height:27.9px;background:rgb(226, 206, 252)"></div>
  <div class="a" style="left:1019.8px;top:658.6px;width:82.7px;height:27.9px;background:rgb(181, 130, 247)"></div>
  <div class="a" style="left:1104.8px;top:658.6px;width:82.7px;height:27.9px;background:rgb(240, 230, 253)"></div>
  <div class="a" style="left:1189.8px;top:658.6px;width:82.7px;height:27.9px;background:rgb(177, 123, 247)"></div>
  <div class="a" style="left:1274.8px;top:658.6px;width:82.7px;height:27.9px;background:rgb(252, 249, 255)"></div>
  <div class="a" style="left:1359.8px;top:658.6px;width:82.7px;height:27.9px;background:rgb(242, 233, 254)"></div>
  <div class="a" style="left:839px;top:665.1px;font-size:11px;color:#333;white-space:nowrap">Uint 6</div>
  <div class="a" style="left:849.8px;top:688.7px;width:82.7px;height:27.9px;background:rgb(244, 236, 254)"></div>
  <div class="a" style="left:934.8px;top:688.7px;width:82.7px;height:27.9px;background:rgb(216, 189, 251)"></div>
  <div class="a" style="left:1019.8px;top:688.7px;width:82.7px;height:27.9px;background:rgb(190, 145, 248)"></div>
  <div class="a" style="left:1104.8px;top:688.7px;width:82.7px;height:27.9px;background:rgb(243, 234, 254)"></div>
  <div class="a" style="left:1189.8px;top:688.7px;width:82.7px;height:27.9px;background:rgb(172, 115, 246)"></div>
  <div class="a" style="left:1274.8px;top:688.7px;width:82.7px;height:27.9px;background:rgb(181, 130, 247)"></div>
  <div class="a" style="left:1359.8px;top:688.7px;width:82.7px;height:27.9px;background:rgb(233, 218, 253)"></div>
  <div class="a" style="left:839px;top:695.2px;font-size:11px;color:#333;white-space:nowrap">Uint 7</div>
  <div class="a" style="left:849.8px;top:718.8px;width:82.7px;height:27.9px;background:rgb(229, 211, 252)"></div>
  <div class="a" style="left:934.8px;top:718.8px;width:82.7px;height:27.9px;background:rgb(181, 130, 247)"></div>
  <div class="a" style="left:1019.8px;top:718.8px;width:82.7px;height:27.9px;background:rgb(238, 226, 253)"></div>
  <div class="a" style="left:1104.8px;top:718.8px;width:82.7px;height:27.9px;background:rgb(250, 246, 254)"></div>
  <div class="a" style="left:1189.8px;top:718.8px;width:82.7px;height:27.9px;background:rgb(243, 234, 254)"></div>
  <div class="a" style="left:1274.8px;top:718.8px;width:82.7px;height:27.9px;background:rgb(238, 226, 253)"></div>
  <div class="a" style="left:1359.8px;top:718.8px;width:82.7px;height:27.9px;background:rgb(236, 223, 253)"></div>
  <div class="a" style="left:839px;top:725.3px;font-size:11px;color:#333;white-space:nowrap">Uint 8</div>
  <div class="a" style="left:849.8px;top:748.9px;width:82.7px;height:27.9px;background:rgb(185, 137, 248)"></div>
  <div class="a" style="left:934.8px;top:748.9px;width:82.7px;height:27.9px;background:rgb(198, 159, 249)"></div>
  <div class="a" style="left:1019.8px;top:748.9px;width:82.7px;height:27.9px;background:rgb(172, 115, 246)"></div>
  <div class="a" style="left:1104.8px;top:748.9px;width:82.7px;height:27.9px;background:rgb(194, 152, 249)"></div>
  <div class="a" style="left:1189.8px;top:748.9px;width:82.7px;height:27.9px;background:rgb(177, 123, 247)"></div>
  <div class="a" style="left:1274.8px;top:748.9px;width:82.7px;height:27.9px;background:rgb(174, 118, 247)"></div>
  <div class="a" style="left:1359.8px;top:748.9px;width:82.7px;height:27.9px;background:rgb(216, 189, 251)"></div>
  <div class="a" style="left:839px;top:755.4px;font-size:11px;color:#333;white-space:nowrap">Uint 9</div>
  <div class="a" style="left:848.6px;top:779px;width:595px;height:1px;background:#e2e4e8"></div>
  <div class="a" style="left:848.6px;top:779px;width:1px;height:5px;background:#e2e4e8"></div>
  <div class="a" style="left:933.6px;top:779px;width:1px;height:5px;background:#e2e4e8"></div>
  <div class="a" style="left:1018.6px;top:779px;width:1px;height:5px;background:#e2e4e8"></div>
  <div class="a" style="left:1103.6px;top:779px;width:1px;height:5px;background:#e2e4e8"></div>
  <div class="a" style="left:1188.6px;top:779px;width:1px;height:5px;background:#e2e4e8"></div>
  <div class="a" style="left:1273.6px;top:779px;width:1px;height:5px;background:#e2e4e8"></div>
  <div class="a" style="left:1358.6px;top:779px;width:1px;height:5px;background:#e2e4e8"></div>
  <div class="a" style="left:1443.6px;top:779px;width:1px;height:5px;background:#e2e4e8"></div>
  <div class="a" style="left:848.8px;top:791px;width:85.0px;text-align:center;font-size:11px;color:#333">w1</div>
  <div class="a" style="left:933.8px;top:791px;width:85.0px;text-align:center;font-size:11px;color:#333">w2</div>
  <div class="a" style="left:1018.8px;top:791px;width:85.0px;text-align:center;font-size:11px;color:#333">w3</div>
  <div class="a" style="left:1103.8px;top:791px;width:85.0px;text-align:center;font-size:11px;color:#333">w4</div>
  <div class="a" style="left:1188.8px;top:791px;width:85.0px;text-align:center;font-size:11px;color:#333">w5</div>
  <div class="a" style="left:1273.8px;top:791px;width:85.0px;text-align:center;font-size:11px;color:#333">w6</div>
  <div class="a" style="left:1358.8px;top:791px;width:85.0px;text-align:center;font-size:11px;color:#333">w7</div>
<!-- section overview -->
  <div class="card" style="left:69px;top:842px;width:931px;height:260px;box-shadow:0 1px 3px rgba(40,50,60,.06)"></div>
  <div class="a" style="left:69px;top:903px;width:931px;height:1.5px;background:#e8ebf0"></div>
  <div class="a" style="left:89px;top:862px;width:130px;height:30px;border-radius:4px;background:#f1f3f7"></div>
  <svg class="a" style="left:102px;top:870px" width="15" height="15" viewBox="0 0 15 15" fill="none" stroke="#333b4a" stroke-width="1.3"><rect x="1.5" y="2.5" width="12" height="10.5" rx="1.5"/><path d="M1.5 6 H13.5 M4.5 1 V3.5 M10.5 1 V3.5"/></svg>
  <div class="a" style="left:121px;top:869.5px;font-size:13.5px;color:#333b4a;white-space:nowrap">13 / 09 / 2024</div>
  <div class="ttl" style="left:700px;top:863.5px;width:279px;font-size:17px;letter-spacing:.15px">Section Overview</div>
  <div class="seat" style="left:106.7px;top:929px"></div>
  <div class="seat" style="left:153.7px;top:929px"></div>
  <div class="seat" style="left:153.7px;top:976px"></div>
  <div class="seat" style="left:200.7px;top:929px"></div>
  <div class="seat" style="left:200.7px;top:976px"></div>
  <div class="seat" style="left:247.7px;top:929px"></div>
  <div class="seat" style="left:247.7px;top:976px"></div>
  <div class="seat" style="left:294.7px;top:929px"></div>
  <div class="seat" style="left:341.7px;top:929px"></div>
  <div class="seat" style="left:341.7px;top:976px"></div>
  <div class="seat" style="left:388.7px;top:929px"></div>
  <div class="seat" style="left:388.7px;top:976px"></div>
  <div class="seat" style="left:435.7px;top:929px"></div>
  <div class="seat" style="left:435.7px;top:976px"></div>
  <div class="seat" style="left:482.7px;top:929px"></div>
  <div class="seat" style="left:482.7px;top:976px"></div>
  <div class="seat" style="left:569.4px;top:929px"></div>
  <div class="seat" style="left:569.4px;top:976px"></div>
  <div class="seat" style="left:616.4px;top:929px"></div>
  <div class="seat" style="left:616.4px;top:976px"></div>
  <div class="seat d" style="left:663.4px;top:929px"></div>
  <div class="seat d" style="left:710.4px;top:929px"></div>
  <div class="seat" style="left:710.4px;top:976px"></div>
  <div class="seat d" style="left:796.8px;top:929px"></div>
  <div class="seat" style="left:796.8px;top:976px"></div>
  <div class="seat d" style="left:843.9px;top:929px"></div>
  <div class="seat" style="left:843.9px;top:976px"></div>
  <div class="seat d" style="left:891.0px;top:929px"></div>
  <div class="seat" style="left:891.0px;top:976px"></div>
  <div class="seat" style="left:938.1px;top:929px"></div>
  <div class="seat" style="left:938.1px;top:976px"></div>
  <!-- revenue overview -->
  <div class="card" style="left:1019px;top:842px;width:455px;height:260px;background:#04875a"></div>
  <div class="badge" style="left:1043px;top:864px;width:54px;height:20px;background:#9fe3c4;color:#0d7a50;line-height:20px">Export</div>
  <div class="ttl" style="left:1150px;top:863.5px;width:304px;font-size:17px;color:#fff">Revenue Overview</div>
  <div class="a" style="left:1067.0px;top:995.0px;width:7px;height:35.0px;background:rgba(255,255,255,.3)"></div>
  <div class="a" style="left:1076.0px;top:968.7px;width:7px;height:61.3px;background:#fff"></div>
  <div class="a" style="left:1123.7px;top:986.0px;width:7px;height:44.0px;background:rgba(255,255,255,.3)"></div>
  <div class="a" style="left:1132.7px;top:961.0px;width:7px;height:69.0px;background:#fff"></div>
  <div class="a" style="left:1181.0px;top:984.0px;width:7px;height:46.0px;background:rgba(255,255,255,.3)"></div>
  <div class="a" style="left:1190.0px;top:948.5px;width:7px;height:81.5px;background:#fff"></div>
  <div class="a" style="left:1237.7px;top:985.0px;width:7px;height:45.0px;background:rgba(255,255,255,.3)"></div>
  <div class="a" style="left:1246.7px;top:950.7px;width:7px;height:79.3px;background:#fff"></div>
  <div class="a" style="left:1294.7px;top:981.0px;width:7px;height:49.0px;background:rgba(255,255,255,.3)"></div>
  <div class="a" style="left:1303.7px;top:959.7px;width:7px;height:70.3px;background:#fff"></div>
  <div class="a" style="left:1351.7px;top:983.0px;width:7px;height:47.0px;background:rgba(255,255,255,.3)"></div>
  <div class="a" style="left:1360.7px;top:945.0px;width:7px;height:85.0px;background:#fff"></div>
  <div class="a" style="left:1408.7px;top:979.0px;width:7px;height:51.0px;background:rgba(255,255,255,.3)"></div>
  <div class="a" style="left:1417.7px;top:956.4px;width:7px;height:73.6px;background:#fff"></div>
  <div class="a" style="left:1019px;top:1021px;width:455px;height:40px;border-radius:14px;background:#fff"></div>
</div></div>

<!-- tech circles -->
<div class="circ" style="left:68px;top:1068px;width:85px;height:85px"></div>
<svg class="a" style="left:80px;top:1075px" width="66" height="70" viewBox="80 1075 66 70">
  <text x="113" y="1090" text-anchor="middle" font-family="Liberation Sans" font-weight="bold" font-size="11" fill="#111" stroke="#111" stroke-width=".6" textLength="34" lengthAdjust="spacingAndGlyphs">HTML</text>
  <path d="M93 1094 L133 1094 L129.5 1133.5 L113 1139 L96.5 1133.5Z" fill="#e44d26"/>
  <path d="M113 1097 L130 1097 L127 1131 L113 1135.5Z" fill="#f16529"/>
  <path d="M101.5 1102 H124.5 L124 1107.5 H107.5 L108 1113 H123.5 L122.2 1127 L113 1130 L103.8 1127 L103.3 1120.5 H108.6 L108.9 1123.3 L113 1124.6 L117.1 1123.3 L117.6 1118 H102.8Z" fill="#ebebeb"/>
</svg>
<div class="circ" style="left:167px;top:1069px;width:87px;height:87px"></div>
<svg class="a" style="left:180px;top:1106px" width="16" height="14" viewBox="0 0 16 14"><path d="M2 3 Q1 9 7 11.5 Q11 12.5 13 11 Q8 11.5 5 8.5 Q3 6 3.5 3Z" fill="#111"/><path d="M6 3.5 Q5.5 7 9 8.3 Q11.5 9 13 8 Q9.5 8 8 6 Q7 4.5 7.3 3Z" fill="#111"/><path d="M9.5 3.5 Q9.3 5.5 11.5 6 Q12.8 6.2 13.5 5.5 Q11.5 5.3 10.5 3.5Z" fill="#111"/></svg>
<div class="a" style="left:196px;top:1102px;font-family:'Liberation Sans';font-style:italic;font-weight:bold;font-size:17px;color:#111;letter-spacing:-0.6px;line-height:20px">jQuery</div>
<div class="circ" style="left:268px;top:1069px;width:86px;height:86px"></div>
<svg class="a" style="left:280px;top:1075px" width="66" height="70" viewBox="280 1075 66 70">
  <text x="312" y="1091" text-anchor="middle" font-family="Liberation Sans" font-weight="bold" font-size="11" fill="#111" stroke="#111" stroke-width=".6" textLength="26" lengthAdjust="spacingAndGlyphs">CSS</text>
  <path d="M291 1095 L333 1095 L329.5 1133 L312 1138.5 L294.5 1133Z" fill="#1c6cc4"/>
  <path d="M312 1098 L330 1098 L327 1130.5 L312 1135Z" fill="#33a2e0"/>
  <path d="M300 1102 H324.5 L324 1107.5 L314.5 1112 H323.5 L322.2 1127 L312 1130 L301.8 1127 L301.3 1120.5 H306.6 L306.9 1123.3 L312 1124.6 L317.1 1123.3 L317.6 1117.5 H300.8 L300.4 1112.5 L310 1108 H300.4Z" fill="#ebebeb"/>
</svg>
<div class="circ" style="left:369px;top:1070px;width:87px;height:87px"></div>
<svg class="a" style="left:380px;top:1080px" width="75" height="65" viewBox="380 1080 75 65" fill="none" stroke="#cd6799" stroke-width="2.8" stroke-linecap="round" stroke-linejoin="round">
  <path d="M401 1109 C412 1104 425 1096 420 1091 C414 1086 390 1096 390 1105 C390 1114 405 1116 402 1124 C399 1132 390 1136 391 1130 C392 1124 402 1120 410 1118"/>
  <path d="M414 1115 C406 1114 401 1129 407 1129 C411 1129 414 1122 416 1113 C414 1122 413 1129 418 1129 C421 1127 422 1120 423 1110 C424 1119 429 1125 424 1130 C421 1132 418 1129 421 1127 C426 1125 428 1119 431 1110 C432 1119 437 1125 432 1130 C429 1132 426 1129 429 1127 C435 1124 442 1118 446 1124"/>
</svg>
<div class="circ" style="left:469px;top:1072px;width:84px;height:84px"></div>
<svg class="a" style="left:475px;top:1085px" width="40" height="38" viewBox="0 0 40 38">
  <path d="M9 2 H31 Q37 2 37 8 V14 Q37 17 40 19 Q37 21 37 24 V30 Q37 36 31 36 H9 Q3 36 3 30 V24 Q3 21 0 19 Q3 17 3 14 V8 Q3 2 9 2Z" fill="#7b1cf1"/>
  <path d="M13 9 H21.5 Q27.5 9 27.5 14 Q27.5 17 25 18.3 Q28.5 19.5 28.5 23.5 Q28.5 29 21.5 29 H13Z M17 12.3 V17.3 H21 Q23.5 17.3 23.5 14.8 Q23.5 12.3 21 12.3Z M17 20.5 V25.7 H21.5 Q24.5 25.7 24.5 23.1 Q24.5 20.5 21.5 20.5Z" fill="#fff" fill-rule="evenodd"/>
</svg>
<div class="a" style="left:518px;top:1093px;font-weight:bold;font-size:23px;color:#7b1cf1;line-height:24px;letter-spacing:-.5px">v5</div>
<div class="a" style="left:482px;top:1125px;width:58px;text-align:center;font-weight:bold;font-size:17px;color:#7b1cf1;line-height:20px">Stable</div>

<div class="btn" style="left:629px;top:1085px;width:165px;height:70px;background:#6a83f8"></div>
<div class="btn" style="left:827px;top:1084px;width:198px;height:71px;background:#1fa797"></div>
<div class="btn" style="left:1059px;top:1085px;width:239px;height:70px;background:#0c1125"></div>
<svg class="a" style="left:1073px;top:1097px" width="46" height="46" viewBox="0 0 46 46"><path d="M19 3 A20 20 0 1 0 44 30 A18 18 0 0 1 19 3Z" fill="#525d8c" stroke="#d6d9e6" stroke-width="1.8"/></svg>
<div class="btn" style="left:1333px;top:1084px;width:198px;height:71px;background:#fca500"></div>
<div class="tw" style="left:655.5px;top:1100.2px;font-size:33.3px;line-height:40px;font-weight:normal;color:#fff;white-space:nowrap;transform-origin:0 0;transform:scaleX(0.9801)"><span style="display:inline-block">M</span><span style="display:inline-block;transform:scaleY(0.87);transform-origin:50% 31.54px">i</span><span style="display:inline-block;transform:scaleY(0.81);transform-origin:50% 31.54px">n</span><span style="display:inline-block;transform:scaleY(0.87);transform-origin:50% 31.54px">i</span><span style="display:inline-block;transform:scaleY(0.81);transform-origin:50% 31.54px">m</span><span style="display:inline-block;transform:scaleY(0.81);transform-origin:50% 31.54px">a</span><span style="display:inline-block;position:relative"><span style="display:inline-block;clip-path:inset(11.96px -4px -6px -4px);transform-origin:50% 31.54px;transform:scaleY(0.81)">l</span><span style="position:absolute;left:0;top:0;clip-path:inset(-6px -4px 26.84px -4px);transform-origin:0 0;transform:translateY(-9.456px) scaleY(2.0402)">l</span></span></div>
<div class="tw" style="left:847.7px;top:1100.2px;font-size:33.3px;line-height:40px;font-weight:normal;color:#fff;white-space:nowrap;transform-origin:0 0;transform:scaleX(0.9097)"><span style="display:inline-block">R</span><span style="display:inline-block">T</span><span style="display:inline-block">L</span><span style="display:inline-block">&nbsp;</span><span style="display:inline-block">R</span><span style="display:inline-block;transform:scaleY(0.81);transform-origin:50% 31.54px">e</span><span style="display:inline-block;transform:scaleY(0.81);transform-origin:50% 31.54px">a</span><span style="display:inline-block;position:relative"><span style="display:inline-block;clip-path:inset(11.96px -4px -6px -4px);transform-origin:50% 31.54px;transform:scaleY(0.81)">d</span><span style="position:absolute;left:0;top:0;clip-path:inset(-6px -4px 26.84px -4px);transform-origin:0 0;transform:translateY(-9.456px) scaleY(2.0402)">d</span></span><span style="display:inline-block;transform:scaleY(0.81);transform-origin:50% 31.54px">y</span></div>
<div class="tw" style="left:1128.1px;top:1103.0px;font-size:33.3px;line-height:40px;font-weight:normal;color:#fff;white-space:nowrap;transform-origin:0 0;transform:scaleX(0.9500)"><span style="display:inline-block">D</span><span style="display:inline-block;transform:scaleY(0.81);transform-origin:50% 31.54px">a</span><span style="display:inline-block;transform:scaleY(0.81);transform-origin:50% 31.54px">r</span><span style="display:inline-block;position:relative"><span style="display:inline-block;clip-path:inset(11.96px -4px -6px -4px);transform-origin:50% 31.54px;transform:scaleY(0.81)">k</span><span style="position:absolute;left:0;top:0;clip-path:inset(-6px -4px 26.84px -4px);transform-origin:0 0;transform:translateY(-9.456px) scaleY(2.0402)">k</span></span><span style="display:inline-block">&nbsp;</span><span style="display:inline-block;transform:scaleY(0.81);transform-origin:50% 31.54px">m</span><span style="display:inline-block;transform:scaleY(0.81);transform-origin:50% 31.54px">o</span><span style="display:inline-block;position:relative"><span style="display:inline-block;clip-path:inset(11.96px -4px -6px -4px);transform-origin:50% 31.54px;transform:scaleY(0.81)">d</span><span style="position:absolute;left:0;top:0;clip-path:inset(-6px -4px 26.84px -4px);transform-origin:0 0;transform:translateY(-9.456px) scaleY(2.0402)">d</span></span><span style="display:inline-block;transform:scaleY(0.81);transform-origin:50% 31.54px">e</span></div>
<div class="tw" style="left:1358.6px;top:1103.0px;font-size:33.3px;line-height:40px;font-weight:normal;color:#111;white-space:nowrap;transform-origin:0 0;transform:scaleX(0.9658)"><span style="display:inline-block">H</span><span style="display:inline-block;transform:scaleY(0.81);transform-origin:50% 31.54px">o</span><span style="display:inline-block;transform:scaleY(0.81);transform-origin:50% 31.54px">r</span><span style="display:inline-block;transform:scaleY(0.87);transform-origin:50% 31.54px">i</span><span style="display:inline-block;transform:scaleY(0.81);transform-origin:50% 31.54px">z</span><span style="display:inline-block;transform:scaleY(0.81);transform-origin:50% 31.54px">o</span><span style="display:inline-block;transform:scaleY(0.81);transform-origin:50% 31.54px">n</span><span style="display:inline-block;transform:scaleY(0.87);transform-origin:50% 31.54px">t</span><span style="display:inline-block;transform:scaleY(0.81);transform-origin:50% 31.54px">a</span><span style="display:inline-block;position:relative"><span style="display:inline-block;clip-path:inset(11.96px -4px -6px -4px);transform-origin:50% 31.54px;transform:scaleY(0.81)">l</span><span style="position:absolute;left:0;top:0;clip-path:inset(-6px -4px 26.84px -4px);transform-origin:0 0;transform:translateY(-9.456px) scaleY(2.0402)">l</span></span></div>

</body></html>
